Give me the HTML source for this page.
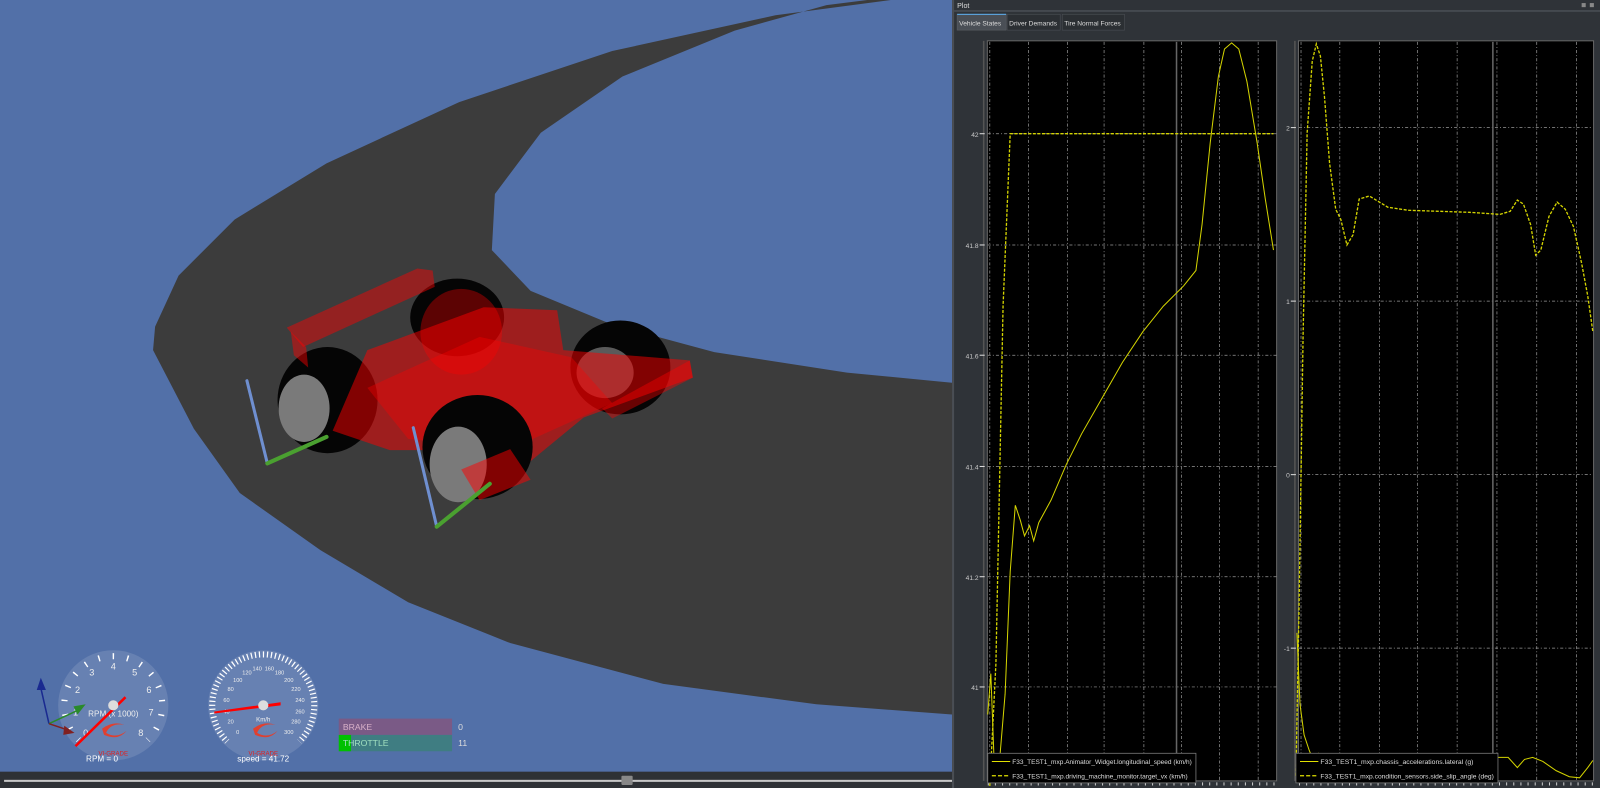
<!DOCTYPE html>
<html><head><meta charset="utf-8"><style>
html,body{margin:0;padding:0;background:#2f3338;overflow:hidden}
svg{display:block}
text{font-family:"Liberation Sans",sans-serif}
</style></head><body>
<svg width="1600" height="788" viewBox="0 0 1568 772" preserveAspectRatio="none" xmlns="http://www.w3.org/2000/svg">
<!-- LEFT 3D VIEW -->
<rect x="0" y="0" width="933" height="772" fill="#5270a8"/>
<polygon fill="#3c3c3c" points="873,0 760,15 600,50 450,100 320,160 230,215 175,270 152,320 150,343 190,420 235,483 314,539 400,590 500,630 650,670 800,690 933,700 933,375 830,365 700,345 600,318 520,285 482,245 485,190 530,130 610,75 720,30 810,5 850,0"/>
<!-- car -->
<ellipse cx="448" cy="311" rx="46" ry="38" fill="#050505"/>
<ellipse cx="608" cy="360" rx="49" ry="46" fill="#050505"/>
<ellipse cx="593" cy="365" rx="28" ry="25" fill="#5a5a5a"/>
<ellipse cx="321" cy="392" rx="49" ry="52" fill="#050505"/>
<ellipse cx="298" cy="400" rx="25" ry="33" fill="#7a7a7a"/>
<g fill="#ff0000">
<polygon opacity="0.45" points="281,321 409,263 424,265 426,281 297,340"/>
<polygon opacity="0.45" points="285,325 300,340 302,360 288,348"/>
<polygon opacity="0.5" points="326,422 360,343 474,301 546,304 552,343 676,353 679,370 572,409 493,474 441,441 382,441"/>
<ellipse opacity="0.35" cx="452" cy="325" rx="40" ry="42"/>
<polygon opacity="0.35" points="360,380 470,330 560,350 600,395 500,440 400,430"/>
</g>
<ellipse cx="468" cy="438" rx="54" ry="51" fill="#050505"/>
<ellipse cx="449" cy="455" rx="28" ry="37" fill="#7a7a7a"/>
<polygon points="452,460 500,440 520,470 470,490" fill="#ff0000" opacity="0.5"/>
<polygon points="590,400 676,353 679,370 600,410" fill="#ff0000" opacity="0.4"/>
<g stroke-linecap="round">
<line x1="242" y1="373" x2="262" y2="454" stroke="#6f8fd0" stroke-width="3"/>
<line x1="262" y1="454" x2="320" y2="428" stroke="#4aa030" stroke-width="4"/>
<line x1="405" y1="419" x2="428" y2="516" stroke="#6f8fd0" stroke-width="3"/>
<line x1="428" y1="516" x2="480" y2="474" stroke="#4aa030" stroke-width="4"/>
</g>
<!-- RPM gauge -->
<circle cx="111" cy="691" r="54" fill="#fff" fill-opacity="0.12"/>
<path d="M77.1,724.9 A48 48 0 1 1 144.9,724.9" fill="none" stroke="#fff" stroke-width="6" stroke-dasharray="1.4 12.74" stroke-dashoffset="0.7"/>
<g fill="#eee" font-size="9" text-anchor="middle">
<text x="84" y="721">0</text><text x="74" y="701">1</text><text x="76" y="679">2</text><text x="90" y="662">3</text><text x="111" y="656">4</text><text x="132" y="662">5</text><text x="146" y="679">6</text><text x="148" y="701">7</text><text x="138" y="721">8</text>
<text x="111" y="702" font-size="8">RPM (x 1000)</text>
<text x="111" y="740" font-size="6" fill="#e02020">VI-GRADE</text>
<text x="100" y="746" font-size="8" fill="#fff">RPM = 0</text>
</g>
<path d="M100,714 q10,-8 22,-4 q-14,-2 -18,8 q10,6 20,-2 q-8,10 -22,4z" fill="#e04030"/>
<line x1="74" y1="731" x2="123" y2="683" stroke="#f00" stroke-width="2.5"/>
<circle cx="111" cy="691" r="5" fill="#ddd"/>
<!-- speed gauge -->
<circle cx="258" cy="691" r="54" fill="#fff" fill-opacity="0.12"/>
<path d="M222.6,726.4 A50 50 0 1 1 293.4,726.4" fill="none" stroke="#fff" stroke-width="6" stroke-dasharray="1.2 2.727" stroke-dashoffset="0.6"/>
<g fill="#eee" font-size="5.5" text-anchor="middle">
<text x="233" y="719">0</text><text x="226" y="709">20</text><text x="222" y="699">40</text><text x="222" y="688">60</text><text x="226" y="677">80</text><text x="233" y="668">100</text><text x="242" y="661">120</text><text x="252" y="657">140</text><text x="264" y="657">160</text><text x="274" y="661">180</text><text x="283" y="668">200</text><text x="290" y="677">220</text><text x="294" y="688">240</text><text x="294" y="699">260</text><text x="290" y="709">280</text><text x="283" y="719">300</text>
<text x="258" y="707" font-size="6">Km/h</text>
<text x="258" y="740" font-size="6" fill="#e02020">VI-GRADE</text>
<text x="258" y="746" font-size="8" fill="#fff">speed = 41.72</text>
</g>
<path d="M248,714 q10,-8 22,-4 q-14,-2 -18,8 q10,6 20,-2 q-8,10 -22,4z" fill="#e04030"/>
<polygon points="210,697 275,688 275,691 210,699" fill="#f00"/>
<circle cx="258" cy="691" r="5" fill="#ddd"/>
<!-- bars -->
<rect x="332" y="704" width="111" height="16" fill="#7a5a86"/>
<rect x="332" y="720" width="111" height="16" fill="#3f7d82"/>
<rect x="332" y="720" width="12" height="16" fill="#00c000"/>
<g font-size="8.5" fill="#ddd"><text x="336" y="715" fill="#d8b0c8">BRAKE</text><text x="336" y="731" fill="#a0e0c0">THROTTLE</text><text x="449" y="715">0</text><text x="449" y="731">11</text></g>
<!-- triad -->
<line x1="48" y1="709" x2="40" y2="674" stroke="#1a2a90" stroke-width="1.5"/><polygon points="36,676 40,664 45,676" fill="#1a2a90"/>
<line x1="48" y1="709" x2="76" y2="696" stroke="#2a8a2a" stroke-width="1.5"/><polygon points="72,692 84,690 76,700" fill="#2a8a2a"/>
<line x1="48" y1="709" x2="66" y2="715" stroke="#802020" stroke-width="1.5"/><polygon points="63,711 73,718 62,720" fill="#802020"/>
<!-- bottom bar -->
<rect x="0" y="756" width="933" height="16" fill="#2e3135"/>
<rect x="4" y="764" width="929" height="2" fill="#c8c8c8"/>
<rect x="609" y="760" width="11" height="9" rx="1" fill="#888"/>

<!-- RIGHT PANEL -->
<rect x="933" y="0" width="635" height="772" fill="#2f3338"/>
<rect x="933" y="0" width="2" height="772" fill="#4a4e54"/>
<text x="938" y="8" font-size="7" fill="#ddd">Plot</text>
<rect x="1550" y="3" width="4" height="4" fill="#888"/><rect x="1558" y="3" width="4" height="4" fill="#888"/>
<rect x="935" y="10" width="633" height="1.5" fill="#4a4f55"/>
<rect x="938" y="14" width="48" height="15.5" fill="#4a4f56" stroke="#5a5e64" stroke-width="0.6"/>
<rect x="938" y="13.5" width="48" height="1.2" fill="#5aa0d8"/>
<rect x="987" y="14" width="52" height="15.5" fill="#2b2f33" stroke="#4a4e54" stroke-width="0.6"/>
<rect x="1041" y="14" width="61" height="15.5" fill="#2b2f33" stroke="#4a4e54" stroke-width="0.6"/>
<g font-size="6.5" fill="#ddd"><text x="940" y="25">Vehicle States</text><text x="989" y="25">Driver Demands</text><text x="1043" y="25">Tire Normal Forces</text></g>

<rect x="967.6" y="40" width="283.5" height="725" fill="#000" stroke="#666" stroke-width="1"/>
<rect x="1272.5" y="40" width="289.2" height="725" fill="#000" stroke="#666" stroke-width="1"/>
<line x1="964" y1="40" x2="964" y2="765" stroke="#555" stroke-width="1.5"/>
<line x1="1269" y1="40" x2="1269" y2="765" stroke="#555" stroke-width="1.5"/>
<g stroke="#999" stroke-width="0.7" stroke-dasharray="3 2 1 2">
<line x1="970" y1="41" x2="970" y2="765"/><line x1="1008" y1="41" x2="1008" y2="765"/><line x1="1046" y1="41" x2="1046" y2="765"/><line x1="1082" y1="41" x2="1082" y2="765"/><line x1="1121" y1="41" x2="1121" y2="765"/><line x1="1158" y1="41" x2="1158" y2="765"/><line x1="1195" y1="41" x2="1195" y2="765"/><line x1="1233" y1="41" x2="1233" y2="765"/>
<line x1="1275" y1="41" x2="1275" y2="765"/><line x1="1313" y1="41" x2="1313" y2="765"/><line x1="1352" y1="41" x2="1352" y2="765"/><line x1="1389" y1="41" x2="1389" y2="765"/><line x1="1428" y1="41" x2="1428" y2="765"/><line x1="1467" y1="41" x2="1467" y2="765"/><line x1="1506" y1="41" x2="1506" y2="765"/><line x1="1545" y1="41" x2="1545" y2="765"/>
<line x1="968" y1="131" x2="1251" y2="131"/><line x1="968" y1="240" x2="1251" y2="240"/><line x1="968" y1="348" x2="1251" y2="348"/><line x1="968" y1="457" x2="1251" y2="457"/><line x1="968" y1="565" x2="1251" y2="565"/><line x1="968" y1="673" x2="1251" y2="673"/>
<line x1="1273" y1="125" x2="1561" y2="125"/><line x1="1273" y1="295" x2="1561" y2="295"/><line x1="1273" y1="465" x2="1561" y2="465"/><line x1="1273" y1="635" x2="1561" y2="635"/>
</g>
<line x1="1153" y1="41" x2="1153" y2="765" stroke="#666" stroke-width="1.5"/>
<line x1="1463" y1="41" x2="1463" y2="765" stroke="#666" stroke-width="1.5"/>
<g font-size="6.5" fill="#ccc" text-anchor="end">
<text x="959" y="134">42</text><text x="959" y="243">41.8</text><text x="959" y="351">41.6</text><text x="959" y="460">41.4</text><text x="959" y="568">41.2</text><text x="959" y="676">41</text>
<text x="1264" y="128">2</text><text x="1264" y="298">1</text><text x="1264" y="468">0</text><text x="1264" y="638">-1</text>
</g>
<g stroke="#ddd" stroke-width="1">
<line x1="960" y1="131" x2="965" y2="131"/><line x1="960" y1="240" x2="965" y2="240"/><line x1="960" y1="348" x2="965" y2="348"/><line x1="960" y1="457" x2="965" y2="457"/><line x1="960" y1="565" x2="965" y2="565"/><line x1="960" y1="673" x2="965" y2="673"/>
<line x1="1265" y1="125" x2="1270" y2="125"/><line x1="1265" y1="295" x2="1270" y2="295"/><line x1="1265" y1="465" x2="1270" y2="465"/><line x1="1265" y1="635" x2="1270" y2="635"/>
</g>
<line x1="968" y1="768" x2="1251" y2="768" stroke="#ccc" stroke-width="3" stroke-dasharray="1 6"/>
<line x1="1273" y1="768" x2="1561" y2="768" stroke="#ccc" stroke-width="3" stroke-dasharray="1 6"/>
<g fill="none" stroke="#d4d400" stroke-width="1">
<polyline points="968,700 971,660 975,766 980,740 985,680 990,560 995,495 1000,510 1004,525 1009,515 1013,530 1018,512 1030,490 1045,455 1060,425 1080,390 1100,355 1120,325 1140,300 1160,280 1172,265 1178,220 1186,140 1194,75 1200,48 1207,42 1214,48 1222,80 1232,140 1240,195 1248,245"/>
<polyline points="970,770 976,650 983,300 990,131 1248,131" stroke-dasharray="3 1.5" stroke-width="1.3"/>
<polyline points="1270,760 1273,600 1277,330 1281,130 1286,60 1290,43 1294,55 1298,95 1303,160 1309,205 1314,215 1320,240 1326,230 1332,195 1342,192 1360,203 1380,206 1410,207 1440,208 1470,210 1480,207 1487,196 1493,200 1500,220 1505,250 1510,245 1518,212 1526,198 1534,205 1542,222 1550,258 1556,290 1561,325" stroke-dasharray="3 1.5" stroke-width="1.3"/>
<polyline points="1271,620 1274,690 1278,720 1283,735 1287,745 1292,738 1300,742 1310,741 1320,743 1400,742 1470,742 1478,742 1487,752 1494,744 1502,742 1512,746 1525,755 1538,761 1548,762 1556,752 1561,745"/>
</g>
<rect x="968" y="738" width="204" height="29" fill="#000" stroke="#777" stroke-width="0.8"/>
<line x1="972" y1="746" x2="990" y2="746" stroke="#e0e000" stroke-width="1"/>
<line x1="972" y1="760" x2="990" y2="760" stroke="#e0e000" stroke-width="1.3" stroke-dasharray="4 2"/>
<text x="992" y="748.5" font-size="6" fill="#ddd" textLength="176" lengthAdjust="spacingAndGlyphs">F33_TEST1_mxp.Animator_Widget.longitudinal_speed (km/h)</text>
<text x="992" y="762.5" font-size="6" fill="#ddd" textLength="172" lengthAdjust="spacingAndGlyphs">F33_TEST1_mxp.driving_machine_monitor.target_vx (km/h)</text>
<rect x="1270" y="738" width="198" height="29" fill="#000" stroke="#777" stroke-width="0.8"/>
<line x1="1274" y1="746" x2="1292" y2="746" stroke="#e0e000" stroke-width="1"/>
<line x1="1274" y1="760" x2="1292" y2="760" stroke="#e0e000" stroke-width="1.3" stroke-dasharray="4 2"/>
<text x="1294" y="748.5" font-size="6" fill="#ddd" textLength="150" lengthAdjust="spacingAndGlyphs">F33_TEST1_mxp.chassis_accelerations.lateral (g)</text>
<text x="1294" y="762.5" font-size="6" fill="#ddd" textLength="170" lengthAdjust="spacingAndGlyphs">F33_TEST1_mxp.condition_sensors.side_slip_angle (deg)</text>
</svg>
</body></html>
